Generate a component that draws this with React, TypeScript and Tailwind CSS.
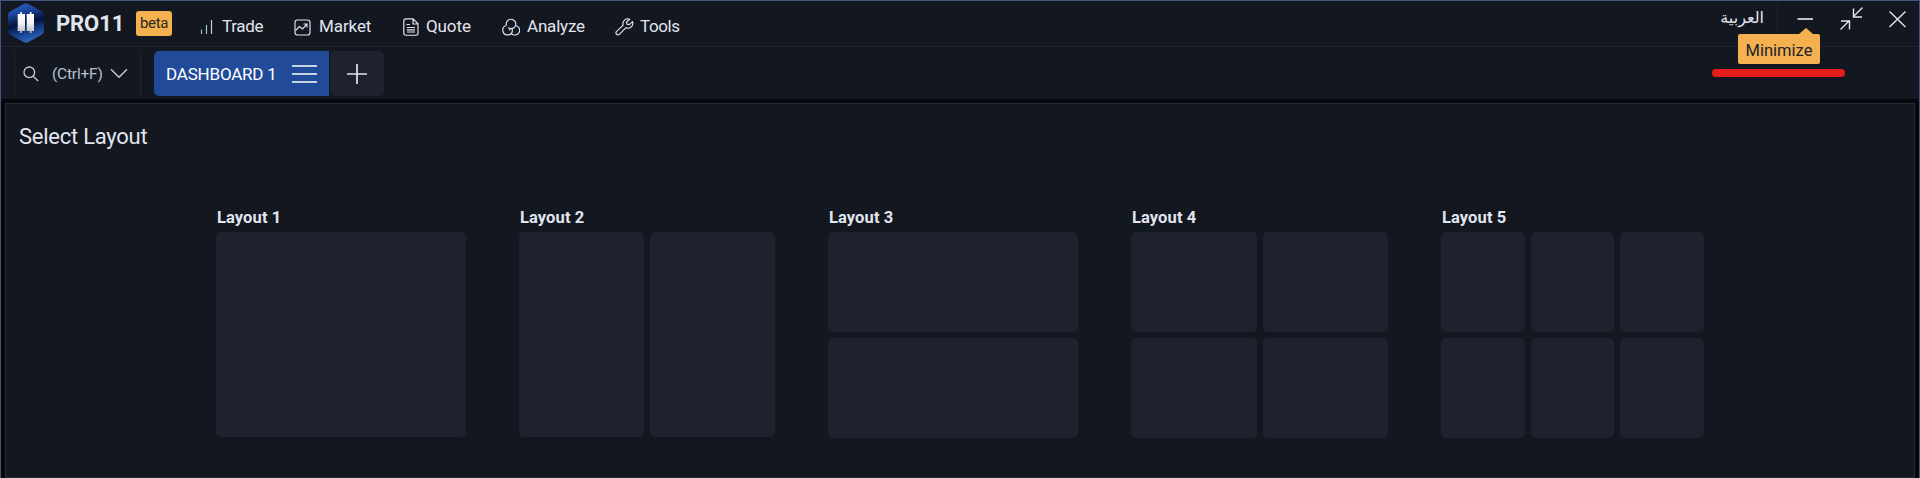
import type { ReactNode } from 'react';

const ink = '#e1e5f0';

function Label({ className, children }: { className: string; children: ReactNode }) {
  return <span className={`block whitespace-nowrap ${className}`}>{children}</span>;
}

function Logo() {
  return (
    <svg width="36" height="40" viewBox="0 0 36 40" className="block">
      <defs>
        <linearGradient id="hex" x1="0" y1="0" x2="0.25" y2="1">
          <stop offset="0" stopColor="#2c66c8" />
          <stop offset="0.3" stopColor="#1b469c" />
          <stop offset="0.58" stopColor="#06113a" />
          <stop offset="0.78" stopColor="#123a80" />
          <stop offset="1" stopColor="#2a5fb4" />
        </linearGradient>
        <linearGradient id="bar" x1="0" y1="0" x2="0" y2="1">
          <stop offset="0" stopColor="#ffffff" />
          <stop offset="0.5" stopColor="#f4f4f6" />
          <stop offset="1" stopColor="#b4b6bc" />
        </linearGradient>
      </defs>
      <path d="M16 .8Q18 -.4 20 .8L34 8.6Q36 9.8 36 12V28Q36 30.2 34 31.4L20 39.2Q18 40.4 16 39.2L2 31.4Q0 30.2 0 28V12Q0 9.8 2 8.6Z" fill="url(#hex)" />
      <path d="M9.7 11h2.5V9h1.6v2H17v17h-3.2v2h-1.6v-2H9.7ZM18.7 11h3.2V9h1.6v2H26v17h-2.5v2h-1.6v-2h-3.2Z" fill="url(#bar)" />
    </svg>
  );
}

function TradeIcon() {
  return (
    <svg width="13" height="16" viewBox="0 0 13 16" fill="none">
      <path d="M1.5 10.5V15" stroke="#b9b48f" strokeWidth="1.2" />
      <path d="M6.5 6V15" stroke="#9fc4d4" strokeWidth="1.2" />
      <path d="M11.5 1V15" stroke="#c8cfdd" strokeWidth="1.2" />
    </svg>
  );
}

function MarketIcon() {
  return (
    <svg width="17" height="17" viewBox="0 0 17 17" fill="none" stroke={ink} strokeWidth="1.15">
      <path d="M3.5 1H13.5Q16 1 16 3.5V13.5Q16 16 13.5 16H3.5Q1 16 1 13.5V3.5Q1 1 3.5 1Z" />
      <path d="M1.5 11.5L5.5 7.5L8.5 10L13 5M9.5 5H13V8.5" />
    </svg>
  );
}

function QuoteIcon() {
  return (
    <svg width="16" height="18" viewBox="0 0 16 18" fill="none" stroke={ink} strokeWidth="1.15">
      <path d="M3 .8H10L15 5.8V15Q15 17.2 12.8 17.2H3Q.8 17.2 .8 15V3Q.8 .8 3 .8ZM10 1V6H15" />
      <path d="M3.5 6.5H7M4 9.5H12M4 11.8H12M4 14H12" />
    </svg>
  );
}

/* Three interlocking rings; the lower pair passes behind the top one. */
function AnalyzeIcon() {
  return (
    <svg width="18" height="18" viewBox="0 0 18 18" fill="none" stroke={ink} strokeWidth="1.15">
      <path d="M4.4 7.4A4.8 4.8 0 1 1 13.6 7.4Q12.600 10.600 9 10.600Q7.400 10.600 6.200 9.800" />
      <path d="M4.400 7.500A4.800 4.800 0 1 0 10.400 12.400Q10.400 11.200 9.800 10.400" />
      <path d="M13.600 7.500A4.800 4.800 0 1 1 9.400 15.600M7.600 12.400Q7.600 11.400 8.200 10.400" />
    </svg>
  );
}

function ToolsIcon() {
  return (
    <svg width="19" height="18" viewBox="0 0 19 18" fill="none" stroke={ink} strokeWidth="1.15" strokeLinejoin="round">
      <path d="M14.8 1.3A4.8 4.8 0 0 0 8.2 7.2L1.4 13.6Q.4 15 1.5 16.3Q2.9 17.5 4.3 16.4L11 9.7A4.8 4.8 0 0 0 17.5 3.6L14.3 6.6L12 6.1L11.5 4Z" />
    </svg>
  );
}

function NavItem({ icon, width, children }: { icon: ReactNode; width: string; children: ReactNode }) {
  return (
    <div className={`flex shrink-0 items-center ${width}`}>
      {icon}
      {children}
    </div>
  );
}

function LayoutOption({ name, width, height, grid, cells }: { name: string; width: string; height: string; grid: string; cells: number }) {
  return (
    <div className={`shrink-0 ${width}`}>
      <Label className="h-6 pl-px text-[16.5px] font-bold leading-5 tracking-[0.1px]">{name}</Label>
      <div className={`grid gap-1.5 ${height} ${grid}`}>
        {Array.from({ length: cells }, (_, i) => (
          <div key={i} className="rounded-[5px] bg-[#1d222e]" />
        ))}
      </div>
    </div>
  );
}

export default function App() {
  return (
    <div className="flex h-[478px] w-[1920px] flex-col overflow-hidden border-x border-t border-[#45557f] bg-[#07080c] font-['Roboto',sans-serif] text-[#e1e5f0]">
      <header className="relative h-[98px] shrink-0 bg-[#13171f]">
        <div className="flex h-[46px] border-b border-[#20242f]">
          <div className="pl-[7px] pt-[2px]"><Logo /></div>
          <Label className="ml-[12px] mt-[8px] w-[80px] text-[22px] font-bold leading-[30px] tracking-[-0.1px]">PRO11</Label>
          <div className="mt-[10px] flex h-[25px] w-[36px] justify-center rounded-[3px] bg-[#f5b150]">
            <Label className="text-[15px] leading-[24px] tracking-[-0.3px] text-[#2b2820]">beta</Label>
          </div>
          <nav className="ml-[28px] mt-[10px] flex h-[32px] text-[17px] tracking-[-0.1px]">
            <NavItem icon={<TradeIcon />} width="w-[94px] gap-[9px] tracking-[-0.3px]">Trade</NavItem>
            <NavItem icon={<MarketIcon />} width="w-[109px] gap-[8px]">Market</NavItem>
            <NavItem icon={<QuoteIcon />} width="w-[99px] gap-[7px]">Quote</NavItem>
            <NavItem icon={<AnalyzeIcon />} width="w-[113px] gap-[7px] tracking-[-0.2px]">Analyze</NavItem>
            <NavItem icon={<ToolsIcon />} width="gap-[6px] tracking-[-0.4px]">Tools</NavItem>
          </nav>
          <div className="ml-auto flex">
            <div className="mt-[3px] flex h-[28px] w-[57px] border-r border-[#20242f]">
              <span dir="rtl" lang="ar" className="block w-[43px] whitespace-nowrap font-['DejaVu_Sans',sans-serif] text-[16px] leading-[27px]">العربية</span>
            </div>
            <div className="relative w-[141px]">
              <svg width="141" height="34" viewBox="1778 1 141 34" fill="none" stroke={ink} strokeWidth="1.4" className="block">
                <path d="M1797.5 19H1813" strokeWidth="2" stroke="#b9c0ce" />
                <path d="M1862.5 7.5L1853.5 16.5M1853.5 8.5V17H1862M1840.5 29.5L1849 21M1841 21H1849.5V29.5" />
                <path d="M1889.5 11.5L1905.5 27M1905.5 11.5L1889.5 27" />
              </svg>
            </div>
          </div>
        </div>
        <div className="flex h-[52px] pl-[13px] pt-[4px]">
          <div className="flex h-[45px] w-[127px] items-center border-x border-[#20242f] pl-[8px]">
            <svg width="16" height="16" viewBox="0 0 16 16" fill="none" stroke="#c4cbd9" strokeWidth="1.3">
              <circle cx="6.3" cy="6.3" r="5.3" />
              <path d="M10.2 10.2L15.2 15" />
            </svg>
            <Label className="ml-[13px] w-[58px] text-[15.5px] leading-5 tracking-[-0.2px] text-[#b7c0d2]">(Ctrl+F)</Label>
            <svg width="18" height="11" viewBox="0 0 18 11" fill="none" stroke="#c4cbd9" strokeWidth="1.5"><path d="M1 1.3L9 9.3L17 1.3" /></svg>
          </div>
          <div className="ml-[13px] flex h-[45px] w-[175px] items-center rounded-l-[5px] bg-[#214b98] pl-[12px] text-white">
            <Label className="w-[126px] text-[17px] leading-6 tracking-[-0.2px]">DASHBOARD 1</Label>
            <svg width="25" height="18" viewBox="0 0 25 18" stroke="white" strokeWidth="1.5"><path d="M0 1H25M0 9H25M0 17H25" /></svg>
          </div>
          <div className="ml-px flex h-[45px] w-[54px] items-center justify-center rounded-[5px] bg-[#1d222e]">
            <svg width="20" height="20" viewBox="0 0 20 20" stroke={ink} strokeWidth="1.7"><path d="M0 10H20M10 0V20" /></svg>
          </div>
        </div>
        <div className="absolute left-[1737px] top-[27px] flex h-[36px] w-[82px] flex-col items-center text-[#20242d]">
          <svg width="14" height="6" viewBox="0 0 14 6" className="ml-[54px] shrink-0"><path d="M0 6L7 0L14 6Z" fill="#f5b150" /></svg>
          <div className="flex h-[30px] w-[82px] items-center justify-center rounded-[2px] bg-[#f5b150] pt-1">
            <Label className="text-[16.5px] leading-6">Minimize</Label>
          </div>
        </div>
        <div className="absolute left-[1711px] top-[68px] h-[8px] w-[133px] rounded-full bg-[#e61b1b]" />
      </header>

      <main className="mx-1 mt-1 h-[375px] shrink-0 border border-[#262b3a] bg-[#13171f]">
        <Label className="ml-[13px] mt-[18px] h-[30px] text-[22px] leading-[30px] tracking-[-0.25px]">Select Layout</Label>
        <div className="ml-[210px] mt-[56px] flex items-start gap-[53px]">
          <LayoutOption name="Layout 1" width="w-[250px]" height="h-[205px]" grid="grid-cols-1" cells={1} />
          <LayoutOption name="Layout 2" width="w-[256px]" height="h-[205px]" grid="grid-cols-2" cells={2} />
          <LayoutOption name="Layout 3" width="w-[250px]" height="h-[206px]" grid="grid-rows-2" cells={2} />
          <LayoutOption name="Layout 4" width="w-[257px]" height="h-[206px]" grid="grid-cols-2 grid-rows-2" cells={4} />
          <LayoutOption name="Layout 5" width="w-[263px]" height="h-[206px]" grid="grid-cols-3 grid-rows-2" cells={6} />
        </div>
      </main>
    </div>
  );
}
